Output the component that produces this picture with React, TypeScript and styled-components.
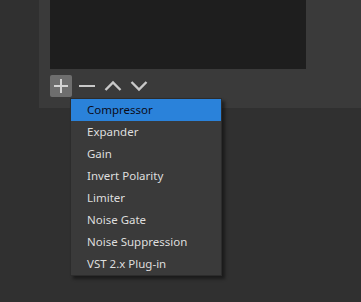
import React from "react";
import styled, { createGlobalStyle } from "styled-components";

const Global = createGlobalStyle`
  html, body { margin: 0; padding: 0; background: #303030; }
  body { width: 361px; height: 302px; overflow: hidden; font-family: "Noto Sans", "Open Sans", sans-serif; }
`;

const Page = styled.div`
  position: relative;
  width: 361px;
  height: 302px;
  background: #303030;
`;

const Panel = styled.div`
  margin-left: 39px;
  width: 322px;
  height: 108px;
  background: #3a3a3a;
  padding-left: 11px;
  box-sizing: border-box;
`;

const Preview = styled.div`
  width: 256px;
  height: 69px;
  background: #1e1e1e;
`;

const Toolbar = styled.div`
  display: flex;
  gap: 4px;
  margin-top: 6px;
`;

const ToolButton = styled.button<{ $active?: boolean }>`
  width: 22px;
  height: 22px;
  padding: 0;
  border: none;
  border-radius: 2px;
  background: ${(p) => (p.$active ? "#6e6e6e" : "transparent")};
  display: flex;
  align-items: center;
  justify-content: center;
`;

const Menu = styled.ul`
  position: absolute;
  left: 70px;
  top: 98px;
  width: 150px;
  margin: 0;
  padding: 0;
  list-style: none;
  background: #3a3a3a;
  border: 1px solid #2c2c2c;
  box-sizing: content-box;
  box-shadow: 3px 3px 3px rgba(0, 0, 0, 0.45);
`;

const Item = styled.li<{ $selected?: boolean }>`
  height: 22px;
  line-height: 22px;
  padding-left: 16px;
  font-size: 11.5px;
  color: ${(p) => (p.$selected ? "#0b0b18" : "#dedede")};
  background: ${(p) => (p.$selected ? "#2a82da" : "transparent")};
  white-space: nowrap;
`;

const items = [
  "Compressor",
  "Expander",
  "Gain",
  "Invert Polarity",
  "Limiter",
  "Noise Gate",
  "Noise Suppression",
  "VST 2.x Plug-in",
];

export default function App() {
  return (
    <Page>
      <Global />
      <Panel>
        <Preview />
        <Toolbar>
          <ToolButton $active>
            <svg width="22" height="22" viewBox="0 0 22 22">
              <path d="M11 4v14M4 11h14" stroke="#d4d4d4" strokeWidth="2" fill="none" />
            </svg>
          </ToolButton>
          <ToolButton>
            <svg width="22" height="22" viewBox="0 0 22 22">
              <path d="M3 11h16" stroke="#c8c8c8" strokeWidth="2" fill="none" />
            </svg>
          </ToolButton>
          <ToolButton>
            <svg width="22" height="22" viewBox="0 0 22 22">
              <path d="M3.5 15L11 7.5L18.5 15" stroke="#c8c8c8" strokeWidth="2.4" fill="none" />
            </svg>
          </ToolButton>
          <ToolButton>
            <svg width="22" height="22" viewBox="0 0 22 22">
              <path d="M3.5 7L11 14.5L18.5 7" stroke="#c8c8c8" strokeWidth="2.4" fill="none" />
            </svg>
          </ToolButton>
        </Toolbar>
      </Panel>
      <Menu>
        {items.map((t, i) => (
          <Item key={t} $selected={i === 0}>
            {t}
          </Item>
        ))}
      </Menu>
    </Page>
  );
}
